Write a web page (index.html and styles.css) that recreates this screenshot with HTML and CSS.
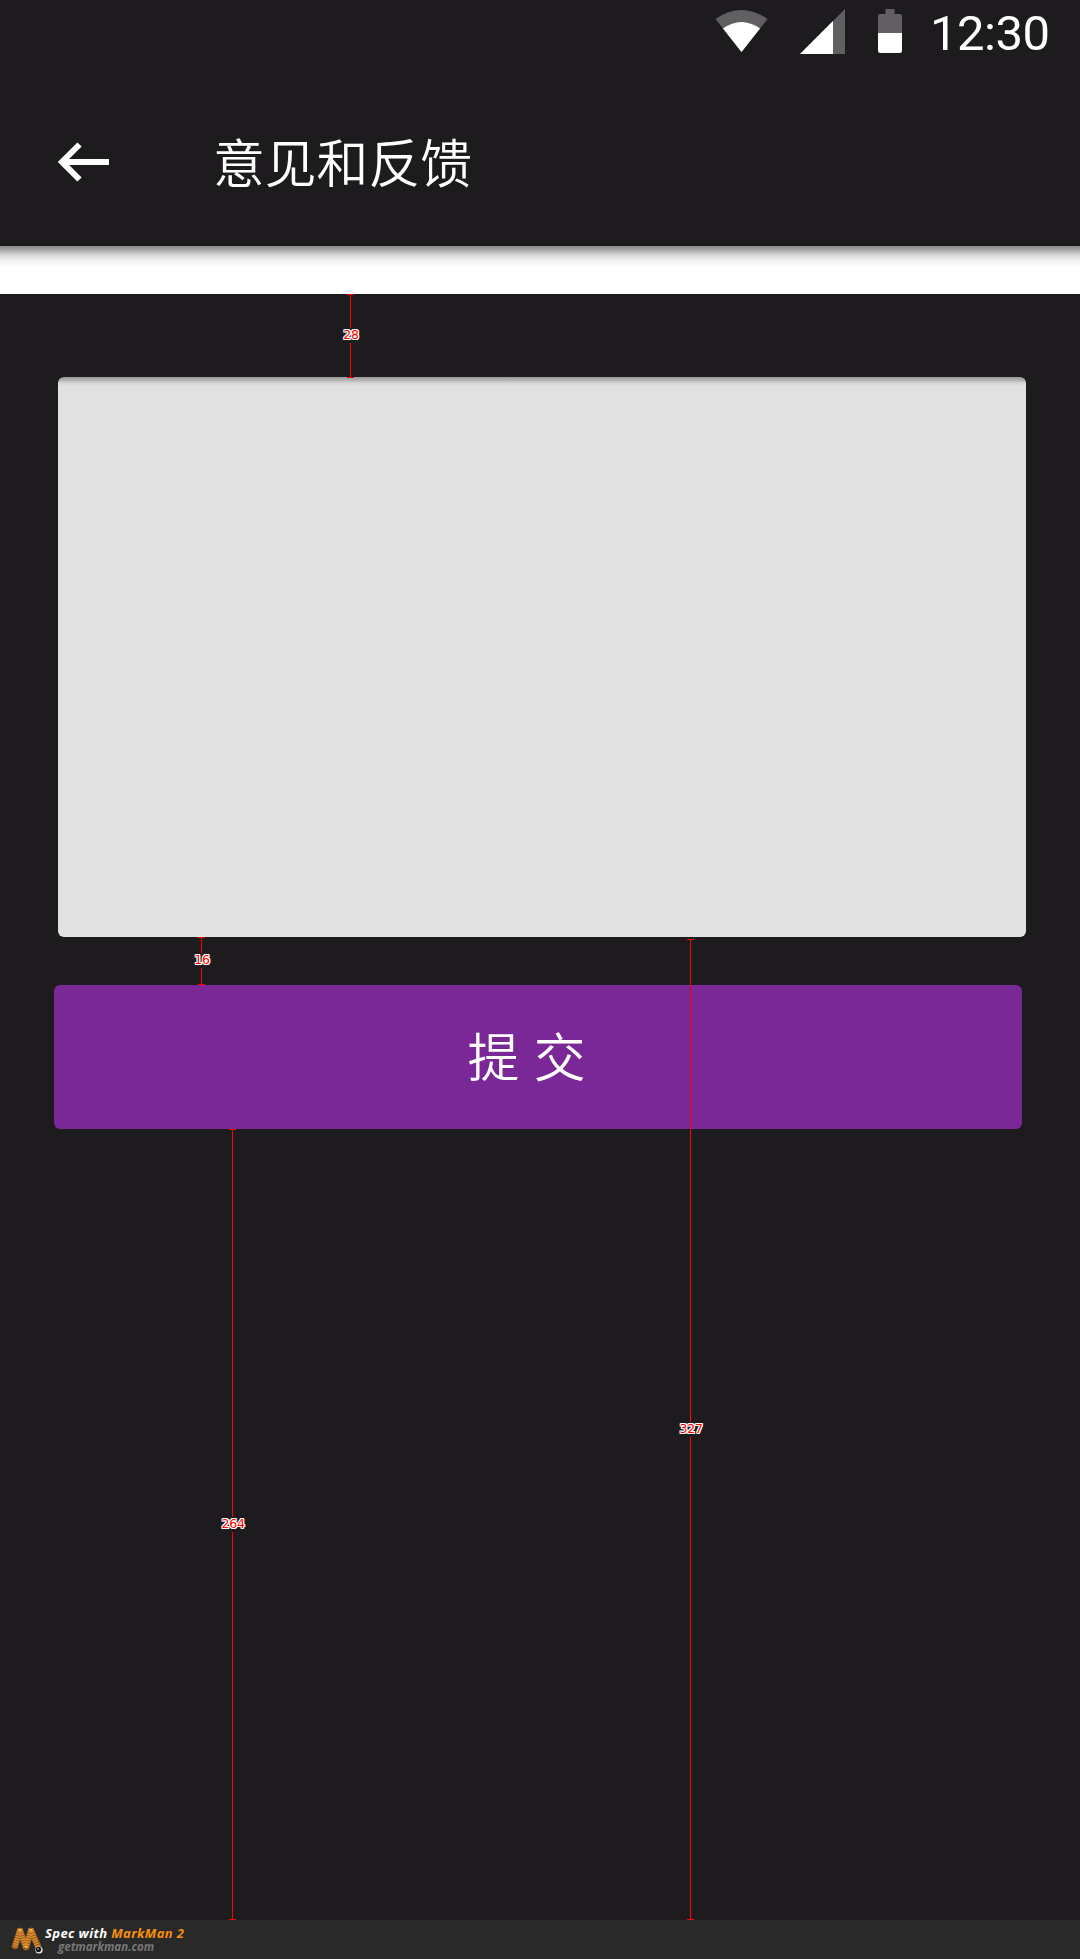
FILE: index.html
```html
<!DOCTYPE html>
<html lang="zh-CN">
<head>
<meta charset="utf-8">
<title>意见和反馈</title>
<link rel="stylesheet" href="styles.css">
</head>
<body>
<div class="screen">
  <header class="header">
    <div class="status">
      <svg class="wifi" width="54" height="43" viewBox="0 0 54 43"><path fill="#615f62" d="M0.5 10Q26.500-8 52.500 10L26.500 43Z"/><path fill="#fff" d="M8 19.500Q26.500 6.500 45 19.500L26.500 43Z"/></svg>
      <svg class="signal" width="45" height="45" viewBox="0 0 45 45"><path fill="#615f62" d="M45 0V45H0Z"/><path fill="#fff" d="M33 12V45H0Z"/></svg>
      <svg class="battery" width="24" height="44" viewBox="0 0 24 44"><path fill="#615f62" d="M7.500 0H16.500V5H21.500Q24 5 24 7.500V24H0V7.500Q0 5 2.500 5H7.500Z"/><path fill="#fff" d="M0 24H24V41.500Q24 44 21.500 44H2.500Q0 44 0 41.500Z"/></svg>
      <span class="clock">12:30</span>
    </div>
    <div class="toolbar">
      <svg class="back" width="52" height="40" viewBox="0 0 52 40" fill="none" stroke="#fff" stroke-width="6"><path d="M5 20H51M21.500 2.500L4 20L21.500 37.500"/></svg>
      <h1 class="title">意见和反馈</h1>
    </div>
  </header>
  <div class="gap"></div>
  <main class="content">
    <div class="field"></div>
    <button class="submit">提 交</button>
  </main>
  <footer class="footer">
    <svg class="logo" width="33" height="28" viewBox="0 0 33 28" fill="none" stroke-linecap="round">
      <g stroke="#9a5a18" stroke-width="6.500"><path d="M9 5L4 20M9 5L15 21"/><path d="M20 5L15 21M20 5L27 20"/></g>
      <g stroke="#d98e35" stroke-width="5" stroke-dasharray="1.500 1" stroke-linecap="butt"><path d="M9 3L4 21M9 3L15 22M20 3L15 22M20 3L27 22"/></g>
      <circle cx="9" cy="4" r="1" fill="#ffd15c"/><circle cx="20" cy="4" r="1" fill="#ffd15c"/><circle cx="15" cy="21" r="1" fill="#ffd15c"/>
      <circle cx="28" cy="24" r="3.600" fill="#eee"/><circle cx="27.500" cy="23.500" r="2.700" fill="#181818"/><circle cx="27" cy="23" r=".7" fill="#fff"/>
    </svg>
    <div class="credit"><div class="credit-name">Spec with <span class="brand">MarkMan 2</span></div><div class="credit-site">getmarkman.com</div></div>
  </footer>
  <div class="measure measure-top"><span>28</span></div>
  <div class="measure measure-between"><span>16</span></div>
  <div class="measure measure-below"><span>264</span></div>
  <div class="measure measure-field"><span>327</span></div>
</div>
</body>
</html>
```

FILE: styles.css
```css
* { box-sizing: border-box; }
body { margin: 0; background: #1d1b1e; }
svg { display: block; flex: none; }
.screen { position: relative; width: 1080px; height: 1959px; display: flex; flex-direction: column; overflow: hidden; background: #1d1b1e; color: #fff; }
.header { height: 246px; flex: none; }
.status { height: 72px; display: flex; align-items: flex-start; justify-content: flex-end; padding: 9px 30px 0 0; }
.wifi { margin-right: 31px; }
.signal { margin-right: 33px; }
.battery { margin-right: 28px; }
.clock { font: 400 49px/50px Roboto, sans-serif; letter-spacing: -.5px; width: 120px; white-space: nowrap; }
.toolbar { height: 180px; display: flex; align-items: center; padding: 0 0 0 58px; }
.back { margin-right: 103px; }
.title { margin: 0; padding-bottom: 3px; font: 350 51.800px/72px "Noto Sans CJK SC", sans-serif; }
.gap { height: 48px; flex: none; background: linear-gradient(#8b8b8b 0, #a6a6a6 4px, #d7d7d7 9px, #f4f4f4 15px, #fff 22px); }
.content { flex: 1; display: flex; flex-direction: column; padding: 83px 54px 0; }
.field { width: 968px; height: 560px; margin: 0 0 48px 4px; border-radius: 6px; background: linear-gradient(#989898 0, #b0b0b0 3px, #d5d5d5 6px, #e1e1e1 9px); }
.submit { width: 968px; height: 144px; border: 0; border-radius: 6px; padding: 0 23px 4px 0; background: #7a2898; color: #fff; font: 350 51.800px/72px "Noto Sans CJK SC", sans-serif; word-spacing: 3px; }
.footer { height: 39px; flex: none; display: flex; align-items: flex-start; padding: 6px 0 0 11px; background: #292929; border-bottom: 2px solid #2b282c; }
.logo { margin-right: 1px; }
.credit { font: italic 700 13px/15px "Open Sans", sans-serif; white-space: nowrap; }
.credit-name { letter-spacing: .4px; }
.brand { color: #f98e0b; }
.credit-site { color: #777; font-size: 11.500px; line-height: 12px; padding-left: 13px; }
.measure { position: absolute; width: 7px; display: flex; align-items: center; justify-content: center; border: solid #f00; border-width: 1px 0; }
.measure::before { content: ""; position: absolute; left: 3px; top: 0; bottom: 0; width: 1px; background: #f00; }
.measure span { position: relative; flex: none; height: 15px; margin: 0 0 1px 1px; background: #1d1b1e; color: #f00; font: 12.500px/13px "DejaVu Sans", sans-serif; letter-spacing: -.2px; text-shadow: -1px 0 #fff, 1px 0 #fff, 0 -1px #fff, 0 1px #fff, -1px -1px #fff, 1px -1px #fff, -1px 1px #fff, 1px 1px #fff; }
.measure-top { left: 347px; top: 294px; height: 84px; }
.measure-between { left: 198px; top: 937px; height: 48px; }
.measure-below { left: 229px; top: 1129px; height: 791px; }
.measure-field { left: 687px; top: 939px; height: 981px; }
```
